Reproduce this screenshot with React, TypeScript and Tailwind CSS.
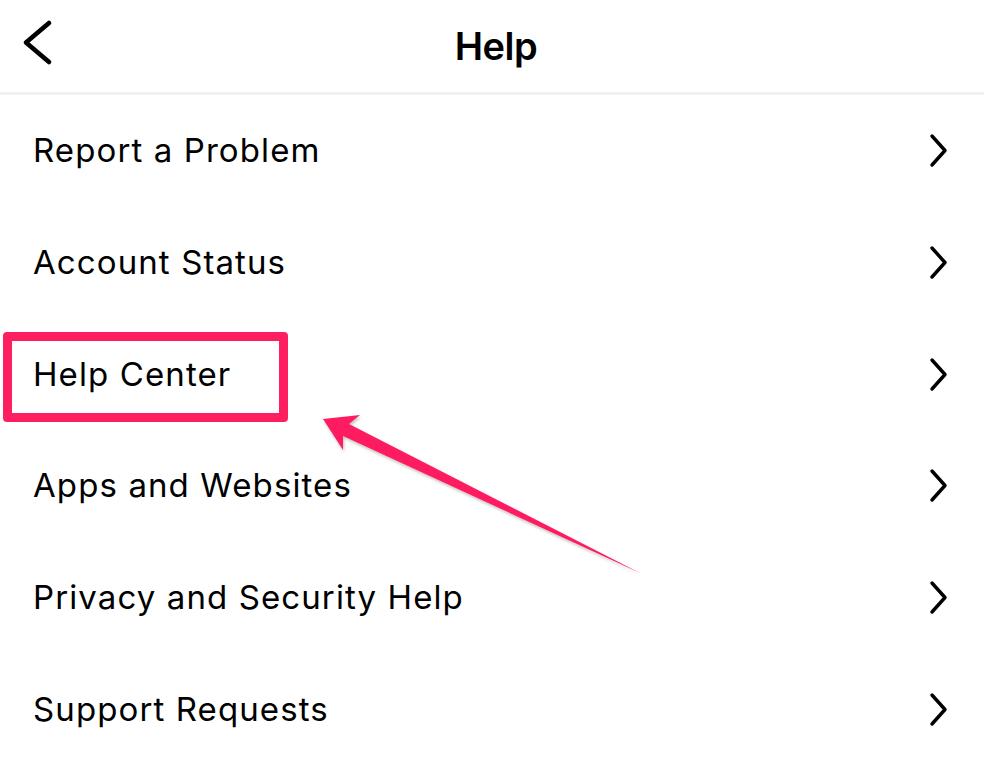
const items = [
  'Report a Problem',
  'Account Status',
  'Help Center',
  'Apps and Websites',
  'Privacy and Security Help',
  'Support Requests',
];

function Chevron() {
  return (
    <svg width="20" height="35" viewBox="0 0 20 35" fill="none">
      <polyline points="3,3 16,17.5 3,32" stroke="#000" strokeWidth="3.4" strokeLinecap="round" strokeLinejoin="round" />
    </svg>
  );
}

export default function App() {
  return (
    <div className="relative h-[763px] w-[984px] overflow-hidden bg-white font-['Inter',sans-serif] text-black">
      {/* Header */}
      <header className="relative flex h-[95px] items-center justify-center border-b-[3px] border-[#f1f1f1]">
        <svg className="absolute left-[20px] top-[18px]" width="34" height="50" viewBox="0 0 34 50" fill="none">
          <polyline points="29,5 6,24.5 29,44" stroke="#000" strokeWidth="4.6" strokeLinecap="round" strokeLinejoin="round" />
        </svg>
        <h1 className="ml-[8px] text-[38px] font-semibold tracking-[-0.5px]">Help</h1>
      </header>

      {/* Rows */}
      <ul className="flex flex-col">
        {items.map((label) => (
          <li key={label} className="flex h-[111.7px] items-center justify-between pl-[33px] pr-[35px]">
            <span className="text-[33px] leading-none tracking-[1.1px]">{label}</span>
            <Chevron />
          </li>
        ))}
      </ul>

      {/* Annotation: highlight box */}
      <div className="absolute left-[3px] top-[332px] h-[90px] w-[285px] rounded-[4px] border-[9px] border-[#fe1f61]" />

      {/* Annotation: arrow */}
      <svg className="pointer-events-none absolute inset-0" width="984" height="763" viewBox="0 0 984 763">
        <defs>
          <filter id="shadow" x="-10%" y="-10%" width="120%" height="130%">
            <feDropShadow dx="1" dy="2" stdDeviation="1.5" floodColor="#000" floodOpacity="0.25" />
          </filter>
        </defs>
        <polygon
          points="323,419 360,415 349,424 640,573 343,436 343,450"
          fill="#fe1f61"
          filter="url(#shadow)"
        />
      </svg>
    </div>
  );
}
